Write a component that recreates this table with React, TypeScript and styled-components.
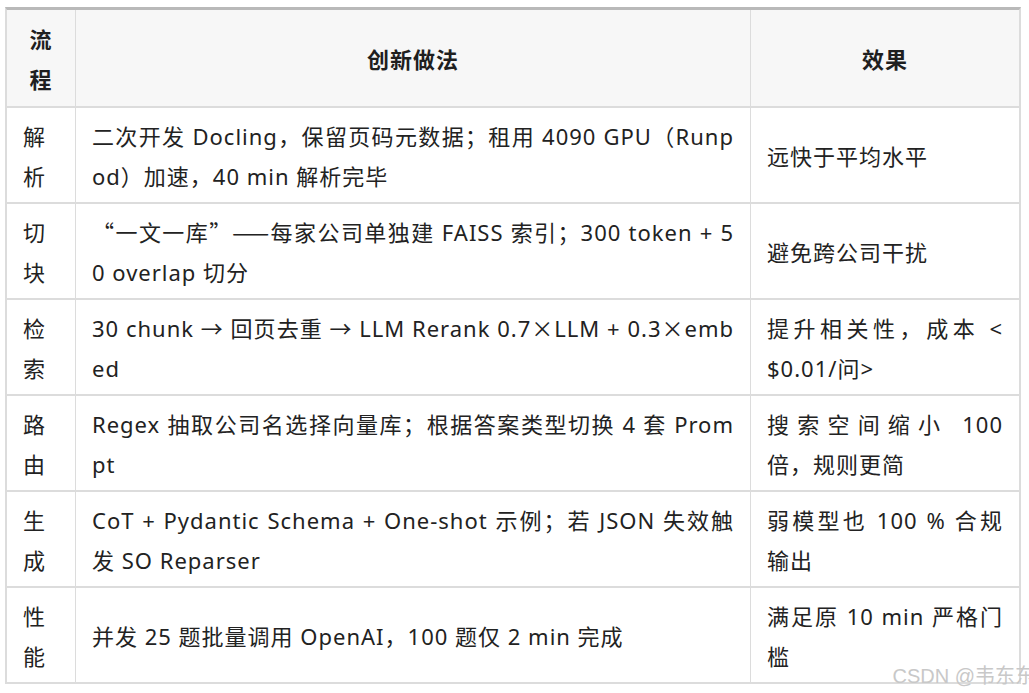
import styled, { createGlobalStyle } from "styled-components";
import type { ReactNode } from "react";

const GlobalStyle = createGlobalStyle`
  html, body {
    margin: 0;
    padding: 0;
    background: #fff;
  }
  body {
    font-family: "Noto Sans", "Noto Sans CJK SC", sans-serif;
  }
`;

type Row = { step: string; method: ReactNode; effect: string };

// full-width punctuation comes from the CJK font, as in the original page
const Cjk = styled.span`
  font-family: "Noto Sans CJK SC", sans-serif;
  line-height: 1;
`;

const ROWS: Row[] = [
  {
    step: "解析",
    method: "二次开发 Docling，保留页码元数据；租用 4090 GPU（Runpod）加速，40 min 解析完毕",
    effect: "远快于平均水平",
  },
  {
    step: "切块",
    method: (
      <>
        <Cjk>“一文一库”——</Cjk>每家公司单独建 FAISS 索引；300 token + 50 overlap 切分
      </>
    ),
    effect: "避免跨公司干扰",
  },
  {
    step: "检索",
    method: (
      <>
        30 chunk → 回页去重 → LLM Rerank 0.7<Cjk>×</Cjk>LLM + 0.3<Cjk>×</Cjk>embed
      </>
    ),
    effect: "提升相关性，成本 < $0.01/问>",
  },
  {
    step: "路由",
    method: "Regex 抽取公司名选择向量库；根据答案类型切换 4 套 Prompt",
    effect: "搜索空间缩小 100 倍，规则更简",
  },
  {
    step: "生成",
    method: "CoT + Pydantic Schema + One-shot 示例；若 JSON 失效触发 SO Reparser",
    effect: "弱模型也 100 % 合规输出",
  },
  {
    step: "性能",
    method: "并发 25 题批量调用 OpenAI，100 题仅 2 min 完成",
    effect: "满足原 10 min 严格门槛",
  },
];

function App() {
  return (
    <Page>
      <GlobalStyle />
      <Table>
        <thead>
          <tr>
            <HeadCell $w={69}>流程</HeadCell>
            <HeadCell $w={675}>创新做法</HeadCell>
            <HeadCell $w={268} $last>
              效果
            </HeadCell>
          </tr>
        </thead>
        <tbody>
          {ROWS.map((row) => (
            <tr key={row.step}>
              <Cell>{row.step}</Cell>
              <Cell>{row.method}</Cell>
              <Cell $last>{row.effect}</Cell>
            </tr>
          ))}
        </tbody>
      </Table>
      <Watermark>CSDN @韦东东</Watermark>
    </Page>
  );
}

const Page = styled.div`
  position: relative;
  width: 1029px;
  height: 693px;
  padding: 7px 0 0 5px;
  box-sizing: border-box;
  overflow: hidden;
`;

const Table = styled.table`
  width: 1016px;
  table-layout: fixed;
  border-collapse: separate;
  border-spacing: 0;
  border-top: 3px solid #b9b9b9;
  border-left: 2px solid #dcdcdc;
  border-right: 2px solid #dcdcdc;
  font-size: 22px;
  letter-spacing: 1px;
  line-height: 40px;
`;

const HeadCell = styled.th<{ $w: number; $last?: boolean }>`
  width: ${(p) => p.$w}px;
  box-sizing: border-box;
  padding: 9px 16px 7px;
  background: #f7f7f7;
  color: #1f1f1f;
  font-weight: 700;
  text-align: center;
  vertical-align: middle;
  border-bottom: 2px solid #dcdcdc;
  border-right: ${(p) => (p.$last ? "none" : "1px solid #dcdcdc")};
`;

const Cell = styled.td<{ $last?: boolean }>`
  box-sizing: border-box;
  padding: 8px 16px 6px;
  color: #222;
  text-align: justify;
  word-break: break-all;
  vertical-align: middle;
  border-bottom: 2px solid #dcdcdc;
  border-right: ${(p) => (p.$last ? "none" : "1px solid #dcdcdc")};
`;

const Watermark = styled.div`
  position: absolute;
  right: -6px;
  bottom: 4px;
  font-family: "Liberation Sans", "Noto Sans CJK SC", sans-serif;
  font-size: 20px;
  color: #c8c8c8;
  white-space: nowrap;
`;

export default App;
